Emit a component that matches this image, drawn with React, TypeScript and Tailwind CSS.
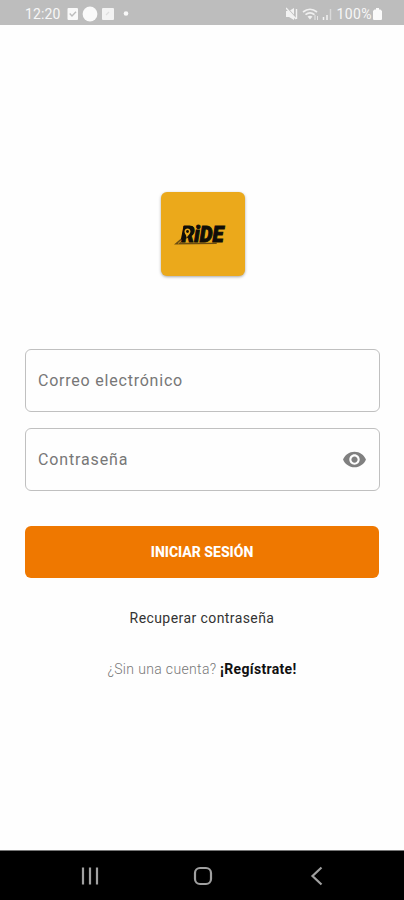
import React from "react";

function StatusBar() {
  return (
    <header className="flex h-[25px] shrink-0 items-center bg-[#bdbdbd] pt-[3px] pl-[25px] pr-[22px] text-[14px] leading-none text-[#f7f7f7]">
      <span className="w-[42px] tracking-[0.1px]">12:20</span>
      <svg className="h-4 w-[64px]" viewBox="0 0 64 16" fill="none">
        <rect x="0.500" y="2" width="10.500" height="12" rx="1" fill="#f9f9f9" />
        <path d="M2.700 7.600 5 10l4-4.200" stroke="#bdbdbd" strokeWidth="1.400" />
        <circle cx="23" cy="8" r="7.400" fill="#fafafa" />
        <rect x="35" y="2" width="12" height="12" rx="1" fill="#f3f3f3" />
        <path d="m39 9 3-3" stroke="#dedede" strokeWidth="1.300" />
        <circle cx="59" cy="7.500" r="2.300" fill="#f9f9f9" />
      </svg>
      <svg className="ml-auto h-4 w-[51px]" viewBox="0 0 51 16" fill="none">
        <path d="M0 5h3l5-3v12l-5-3H0z" fill="#f2f2f2" />
        <path d="m1 2 10 11" stroke="#bdbdbd" strokeWidth="1.500" />
        <path d="m0 2 10 11M10.500 3v10" stroke="#f2f2f2" strokeWidth="1.400" />
        <path d="M17 6q7-5.500 14 0M19.500 8.700q4.500-3.700 9 0" stroke="#f0f0f0" strokeWidth="1.700" />
        <path d="m21.500 10.500 2.500 3 2.500-3q-2.500-1.500-5 0z" fill="#f0f0f0" />
        <path d="M29 9v5M31.500 14v-4" stroke="#e6e6e6" strokeWidth="1" />
        <path d="M37.500 14v-3M41 14V9" stroke="#f2f2f2" strokeWidth="1.500" />
        <path d="M44.500 14V3" stroke="#dadada" strokeWidth="1.400" />
      </svg>
      <span className="tracking-[0.4px]">100%</span>
      <svg className="ml-px h-4 w-[9px]" viewBox="0 0 9 16" fill="#fafafa">
        <path d="M3 2h3v1.500h1.500L9 5v8q0 1-1 1H1q-1 0-1-1V5l1.500-1.500H3z" />
      </svg>
    </header>
  );
}

function Logo() {
  return (
    <div className="mt-[167px] ml-[161px] h-[84px] w-[84px] rounded-[6px] bg-[#eba91b] shadow-[0_1px_3px_rgba(0,0,0,0.35)]">
      <svg className="h-full w-full" viewBox="0 0 84 84">
        <path d="M13 52.500 20 46.500h3l-3.500 4.200H56l-.5 1.300z" fill="#6b4d12" />
        <path d="m17 51.500 4-3.500" stroke="#eba91b" strokeWidth=".8" />
        <text
          x="20.500"
          y="50"
          textLength="42"
          lengthAdjust="spacingAndGlyphs"
          fontFamily="Roboto, sans-serif"
          fontWeight="900"
          fontStyle="italic"
          fontSize="22"
          fill="#100e08"
          stroke="#100e08"
          strokeWidth="1"
        >
          RiDE
        </text>
        <path d="M22.500 34h8.500l2 2-1 7-4 2-6 3-2-1z" fill="#100e08" />
        <path d="M23.500 39.500c0-4 6-4 6 0 0 2.300-2.300 3.500-4 6.500 0-3.500-2-4.200-2-6.500z" fill="#eba91b" />
        <circle cx="26.500" cy="39.500" r="1.400" fill="#100e08" />
      </svg>
    </div>
  );
}

export default function App() {
  return (
    <main className="flex h-[900px] w-[404px] flex-col overflow-hidden bg-[#fefefe] font-[Roboto,sans-serif]">
      <StatusBar />
      <Logo />
      <form className="mt-[73px] ml-[25px] flex w-[355px] flex-col">
        <div className="flex h-[63px] items-center rounded-[6px] border-[1.500px] border-[#c0c0c0] pl-[12px] text-[16px] text-[#777]">
          <span className="tracking-[0.78px]">Correo electrónico</span>
        </div>
        <div className="mt-[16px] flex h-[63px] items-center justify-between rounded-[6px] border-[1.500px] border-[#c0c0c0] px-[12px] text-[16px] text-[#777]">
          <span className="tracking-[0.85px]">Contraseña</span>
          <svg className="h-[25px] w-[25px]" viewBox="0 0 24 24" fill="#808080">
            <path d="M12 4.500C7 4.500 2.730 7.610 1 12c1.730 4.390 6 7.500 11 7.500s9.270-3.110 11-7.500c-1.730-4.390-6-7.500-11-7.500zM12 17c-2.760 0-5-2.240-5-5s2.240-5 5-5 5 2.240 5 5-2.240 5-5 5zm0-8c-1.660 0-3 1.340-3 3s1.340 3 3 3 3-1.340 3-3-1.340-3-3-3z" />
          </svg>
        </div>
        <button type="button" className="mt-[35px] flex h-[52px] w-[354px] items-center justify-center rounded-[6px] bg-[#ef7800] text-[14px] font-extrabold text-white">
          <span>INICIAR SESIÓN</span>
        </button>
      </form>
      <p className="mt-[30px] text-center text-[14px] leading-5 tracking-[0.42px] text-[#333]">Recuperar contraseña</p>
      <p className="mt-[31px] text-center text-[14px] leading-5 text-[#111]">
        <span className="font-light tracking-[0.35px] text-[#777]">¿Sin una cuenta?</span>{" "}
        <span className="font-bold tracking-[0.32px]">¡Regístrate!</span>
      </p>
      <nav className="mt-auto h-[50px] shrink-0 border-t border-[#777] bg-black">
        <svg className="h-[49px] w-full" viewBox="0 0 404 49" fill="none" stroke="#a0a0a0" strokeWidth="2.200">
          <path d="M83 16.500v17M90 16.500v17M97 16.500v17" />
          <rect x="195" y="17" width="16" height="16" rx="5" />
          <path d="m321.500 16.500-9 8.500 9 8.500" />
        </svg>
      </nav>
    </main>
  );
}
